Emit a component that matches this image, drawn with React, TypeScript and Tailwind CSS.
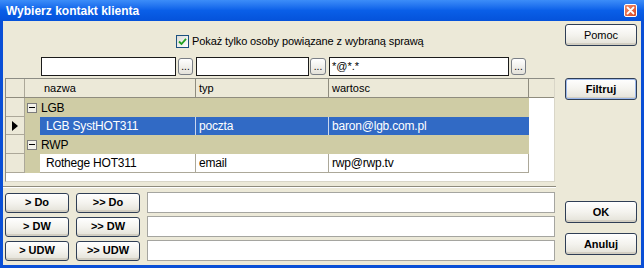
import React from "react";

function Btn({
  label,
  bold,
  def,
  className,
}: {
  label: string;
  bold?: boolean;
  def?: boolean;
  className: string;
}) {
  return (
    <div
      className={
        "flex items-center justify-center rounded-[3px] border border-[#2F3E55] bg-gradient-to-b from-[#FFFFFF] via-[#F4F3EE] to-[#E3E1D7] text-[11px] text-black shadow-[inset_0_-2px_0_#D2CEC2] " +
        (bold ? "font-bold " : "") +
        (def ? "ring-1 ring-inset ring-[#9DB9EB] " : "") +
        className
      }
    >
      {label}
    </div>
  );
}

function Dots({ className }: { className: string }) {
  return (
    <div
      className={
        "flex h-[17px] items-end justify-center rounded-[3px] border border-[#7A7F86] bg-gradient-to-b from-white to-[#E4E2DA] pb-[2px] text-[10px] leading-none text-black " +
        className
      }
    >
      ...
    </div>
  );
}

function Minus() {
  return (
    <div className="flex h-[10px] w-[10px] items-center justify-center border border-[#7C7C7C] bg-[#F2F1EA]">
      <div className="h-px w-[6px] bg-black" />
    </div>
  );
}

export default function App() {
  return (
    <div className="flex h-[268px] w-[644px] flex-col overflow-hidden bg-[#0A4FD6] font-['Liberation_Sans',Arial,sans-serif]">
      {/* title bar */}
      <div className="flex h-[21px] shrink-0 items-center justify-between bg-gradient-to-b from-[#3C8DF8] via-[#0A5FE8] to-[#0552DA] pl-[6px] pr-[7px]">
        <span className="text-[12px] font-bold leading-none text-white">
          Wybierz kontakt klienta
        </span>
        <div className="flex h-[13px] w-[13px] items-center justify-center rounded-[2px] border border-white bg-gradient-to-br from-[#F08A6A] to-[#D9451C]">
          <svg width="9" height="9" viewBox="0 0 9 9">
            <path d="M1.5 1.5 L7.5 7.5 M7.5 1.5 L1.5 7.5" stroke="white" strokeWidth="1.8" strokeLinecap="round" />
          </svg>
        </div>
      </div>

      {/* body */}
      <div className="mx-[3px] mb-[3px] flex flex-1 bg-[#ECE9D8] text-black">
        {/* left column */}
        <div className="flex w-[555px] flex-col">
          {/* checkbox */}
          <div className="mt-[14px] flex h-[13px] items-center pl-[173px]">
            <div className="flex h-[13px] w-[13px] items-center justify-center border border-[#1C5180] bg-gradient-to-br from-[#DCDCD7] to-white">
              <svg width="9" height="9" viewBox="0 0 9 9">
                <path d="M1 4.5 L3.5 7 L8 1.8" stroke="#21A121" strokeWidth="1.8" fill="none" />
              </svg>
            </div>
            <span className="ml-[3px] text-[11px] leading-none tracking-[-0.1px]">
              Pokaż tylko osoby powiązane z wybraną sprawą
            </span>
          </div>

          {/* filter row */}
          <div className="mt-[9px] flex h-[19px] items-center pl-[38px]">
            <div className="h-[19px] w-[135px] border border-[#1B1B1B] bg-white" />
            <Dots className="ml-[2px] w-[15px]" />
            <div className="ml-[3px] h-[19px] w-[113px] border border-[#1B1B1B] bg-white" />
            <Dots className="ml-[1px] w-[16px]" />
            <div className="ml-[3px] flex h-[19px] w-[180px] items-center border border-[#1B1B1B] bg-white pl-[2px] text-[11px] leading-none">
              *@*.*
            </div>
            <Dots className="ml-[2px] w-[15px]" />
          </div>

          {/* grid */}
          <div className="ml-[2px] mt-[2px] flex h-[104px] w-[550px] flex-col border border-[#8C8C84] border-b-[#D9D6C8] border-r-[#D9D6C8] bg-white text-[11px] leading-none">
            {/* header */}
            <div className="flex h-[19px] shrink-0 border-b border-[#8F8C7E] bg-[#ECE9D8]">
              <div className="w-[19px] border-r border-[#ACA899]" />
              <div className="flex w-[171px] items-center border-r border-[#8F8C7E] pl-[19px]">nazwa</div>
              <div className="flex w-[133px] items-center border-r border-[#8F8C7E] pl-[3px]">typ</div>
              <div className="flex w-[200px] items-center border-r border-[#8F8C7E] pl-[3px]">wartosc</div>
              <div className="flex-1" />
            </div>

            {/* group LGB */}
            <div className="flex h-[19px] shrink-0">
              <div className="w-[19px] border-b border-r border-[#ACA899] bg-[#ECE9D8]" />
              <div className="flex w-[504px] items-center bg-[#CFCCA5] pl-[2px] text-[12px] tracking-[-0.2px]">
                <Minus />
                <span className="ml-[4px]">LGB</span>
              </div>
              <div className="flex-1" />
            </div>

            {/* selected row */}
            <div className="flex h-[18px] shrink-0">
              <div className="flex w-[19px] items-center justify-center border-b border-r border-[#ACA899] bg-[#ECE9D8]">
                <svg width="6" height="10" viewBox="0 0 6 10">
                  <path d="M0 0 L6 5 L0 10 Z" fill="black" />
                </svg>
              </div>
              <div className="w-[15px] bg-[#CFCCA5]" />
              <div className="flex w-[156px] items-center border-r border-[#C9D6EE] bg-[#316AC5] pl-[6px] text-[12px] tracking-[-0.2px] text-white">
                LGB SystHOT311
              </div>
              <div className="flex w-[133px] items-center border-r border-[#C9D6EE] bg-[#316AC5] pl-[3px] text-[12px] tracking-[-0.2px] text-white">
                poczta
              </div>
              <div className="flex w-[200px] items-center bg-[#316AC5] pl-[3px] text-[12px] tracking-[-0.2px] text-white">
                baron@lgb.com.pl
              </div>
              <div className="flex-1" />
            </div>

            {/* group RWP */}
            <div className="flex h-[19px] shrink-0">
              <div className="w-[19px] border-b border-r border-[#ACA899] bg-[#ECE9D8]" />
              <div className="flex w-[504px] items-center bg-[#CFCCA5] pl-[2px] text-[12px] tracking-[-0.2px]">
                <Minus />
                <span className="ml-[4px]">RWP</span>
              </div>
              <div className="flex-1" />
            </div>

            {/* row Rothege */}
            <div className="flex h-[19px] shrink-0">
              <div className="w-[19px] border-b border-r border-[#ACA899] bg-[#ECE9D8]" />
              <div className="w-[15px] bg-[#CFCCA5]" />
              <div className="flex w-[156px] items-center border-b border-r border-[#ACA899] pl-[6px] text-[12px] tracking-[-0.2px]">
                Rothege HOT311
              </div>
              <div className="flex w-[133px] items-center border-b border-r border-[#ACA899] pl-[3px] text-[12px] tracking-[-0.2px]">
                email
              </div>
              <div className="flex w-[200px] items-center border-b border-r border-[#ACA899] pl-[3px] text-[12px] tracking-[-0.2px]">
                rwp@rwp.tv
              </div>
              <div className="flex-1" />
            </div>
            <div className="flex-1" />
          </div>

          {/* separator */}
          <div className="mt-[4px] h-[2px] w-[553px] border-t border-b border-t-[#8E8B7D] border-b-white" />

          {/* bottom rows */}
          <div className="mt-[4px] flex flex-col gap-[3px]">
            <div className="flex h-[21px] items-center">
              <Btn label="> Do" bold className="ml-[2px] h-[20px] w-[64px]" />
              <Btn label=">> Do" bold className="ml-[7px] h-[20px] w-[64px]" />
              <div className="ml-[7px] h-[21px] w-[408px] border border-[#A5A5A0] bg-white" />
            </div>
            <div className="flex h-[21px] items-center">
              <Btn label="> DW" bold className="ml-[2px] h-[20px] w-[64px]" />
              <Btn label=">> DW" bold className="ml-[7px] h-[20px] w-[64px]" />
              <div className="ml-[7px] h-[21px] w-[408px] border border-[#A5A5A0] bg-white" />
            </div>
            <div className="flex h-[21px] items-center">
              <Btn label="> UDW" bold className="ml-[2px] h-[20px] w-[64px]" />
              <Btn label=">> UDW" bold className="ml-[7px] h-[20px] w-[64px]" />
              <div className="ml-[7px] h-[21px] w-[408px] border border-[#A5A5A0] bg-white" />
            </div>
          </div>
        </div>

        {/* right column */}
        <div className="flex flex-col pl-[7px]">
          <Btn label="Pomoc" className="mt-[3px] h-[22px] w-[72px]" />
          <Btn label="Filtruj" bold def className="mt-[32px] h-[22px] w-[72px]" />
          <Btn label="OK" bold className="mt-[101px] h-[22px] w-[72px]" />
          <Btn label="Anuluj" bold className="mt-[10px] h-[22px] w-[72px]" />
        </div>
      </div>
    </div>
  );
}
